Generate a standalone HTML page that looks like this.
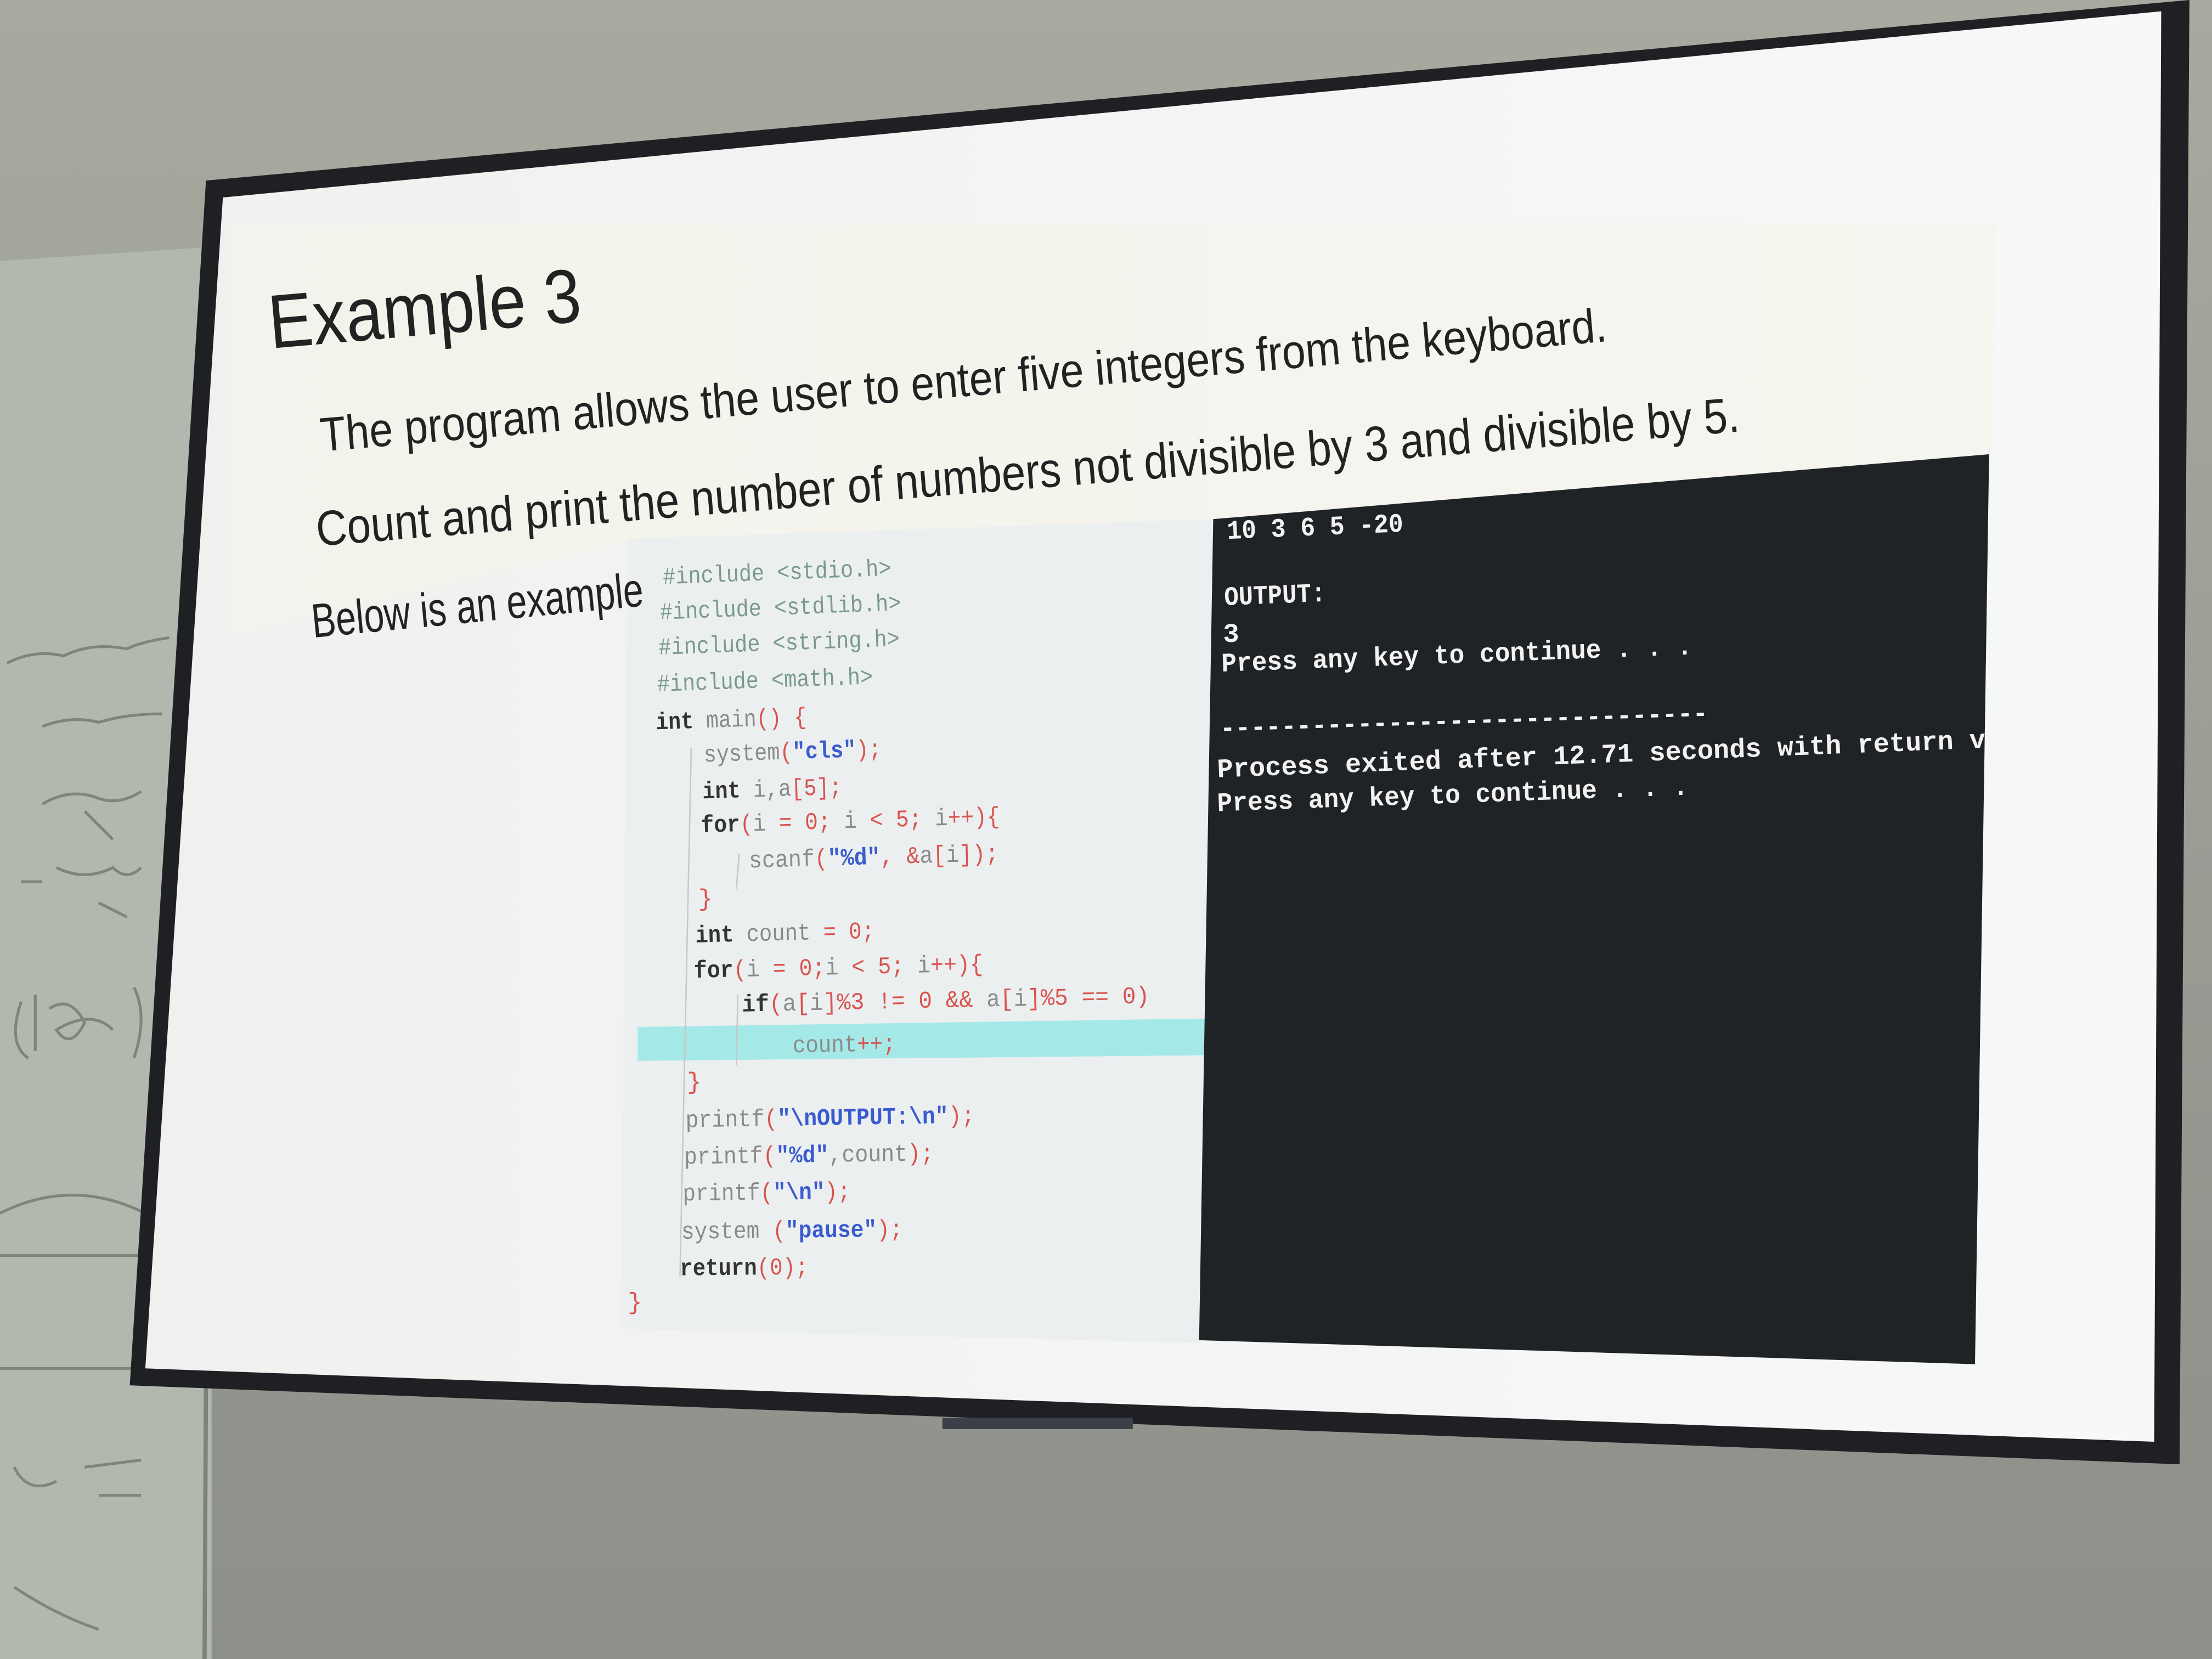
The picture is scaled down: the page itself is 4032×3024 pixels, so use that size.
<!DOCTYPE html>
<html><head><meta charset="utf-8"><style>
html,body{margin:0;padding:0;width:4032px;height:3024px;overflow:hidden;background:#9a9e95}
svg{display:block}
.t{font-family:"Liberation Sans Narrow","Liberation Sans",sans-serif;fill:#222}
.c{font-family:"Liberation Mono","DejaVu Sans Mono",monospace;font-size:17px;fill:#8a8a8a}
.k{fill:#333;font-weight:bold}
.r{fill:#d9534f}
.s{fill:#3a5bd0;font-weight:bold}
.m{font-family:"Liberation Mono","DejaVu Sans Mono",monospace;font-size:19px;fill:#f2f2f2;font-weight:bold}
</style></head><body>
<svg width="4032" height="3024" viewBox="0 0 1568 1176" xmlns="http://www.w3.org/2000/svg">
<defs>
<linearGradient id="wall" x1="0" y1="0" x2="0" y2="1">
<stop offset="0" stop-color="#a6aa9f"/><stop offset="1" stop-color="#8d9089"/>
</linearGradient>
<linearGradient id="scr" x1="0" y1="0" x2="1" y2="0">
<stop offset="0" stop-color="#f0f1ef"/><stop offset="1" stop-color="#f7f8f8"/>
</linearGradient>
</defs>
<rect width="1568" height="1176" fill="url(#wall)"/>
<polygon points="0,185 150,175 150,1176 0,1176" fill="#b3b8ae"/>
<line x1="150" y1="175" x2="145" y2="1176" stroke="#7e827a" stroke-width="3"/>
<g fill="none" stroke="#6a6f68" stroke-width="2" opacity="0.7">
<path d="M5,470 q20,-10 40,-5 q20,-10 45,-5 q10,-5 30,-8"/>
<path d="M30,515 q20,-8 40,-3 q20,-6 45,-6"/>
<path d="M30,570 q20,-12 40,-4 q15,5 30,-5 M60,575 l20,20"/>
<path d="M15,625 l15,0 M40,615 q20,10 40,0 q10,10 20,0 M70,640 l20,10"/>
<path d="M15,710 q-10,30 5,40 M25,705 l0,40 M35,715 q15,-10 25,10 q-10,20 -20,5 q25,-15 40,0 M95,700 q10,20 0,50"/>
<path d="M0,860 q60,-30 120,10 M0,890 l100,0 l0,80 l-100,0"/>
<path d="M10,1040 q10,20 30,10 M60,1040 l40,-5 M70,1060 l30,0"/>
<path d="M10,1125 q30,20 60,30"/>
</g>
<polygon points="146,128 1552,0 1552,0 1545,1038 92,982" fill="#1f2024"/>
<polygon points="158,140 1532,8 1527,1022 103,970" fill="url(#scr)"/>
<polygon points="160,160 1415,158 1412,322 860,368 450,382 165,450" fill="#f5f4ea" opacity="0.6"/>
<polygon points="445,382 860,368 852,952 440,942" fill="#eceff0"/>
<polygon points="452,728 855,722 855,748 452,752" fill="#a4e9e8"/>
<polygon points="860,368 1410,322 1400,967 850,950" fill="#202326"/>

<text class="t" x="192" y="247" font-size="54" textLength="222" lengthAdjust="spacingAndGlyphs" transform="rotate(-5 192 247)">Example 3</text>
<text class="t" x="228" y="320" font-size="34" textLength="915" lengthAdjust="spacingAndGlyphs" transform="rotate(-4.9 228 320)">The program allows the user to enter five integers from the keyboard.</text>
<text class="t" x="225" y="387" font-size="35" textLength="1012" lengthAdjust="spacingAndGlyphs" transform="rotate(-4.6 225 387)">Count and print the number of numbers not divisible by 3 and divisible by 5.</text>
<text class="t" x="222" y="452" font-size="34" textLength="236" lengthAdjust="spacingAndGlyphs" transform="rotate(-5.5 222 452)">Below is an example</text>

<g>
<text class="c" x="470" y="414" textLength="162" lengthAdjust="spacingAndGlyphs" transform="rotate(-2.2 470 414)" style="fill:#7a9a8a">#include &lt;stdio.h&gt;</text>
<text class="c" x="468" y="439" textLength="171" lengthAdjust="spacingAndGlyphs" transform="rotate(-2.2 468 439)" style="fill:#7a9a8a">#include &lt;stdlib.h&gt;</text>
<text class="c" x="467" y="464" textLength="171" lengthAdjust="spacingAndGlyphs" transform="rotate(-2.1 467 464)" style="fill:#7a9a8a">#include &lt;string.h&gt;</text>
<text class="c" x="466" y="490" textLength="153" lengthAdjust="spacingAndGlyphs" transform="rotate(-2 466 490)" style="fill:#7a9a8a">#include &lt;math.h&gt;</text>
<text class="c" x="465" y="517" textLength="107" lengthAdjust="spacingAndGlyphs" transform="rotate(-2 465 517)"><tspan class="k">int</tspan> main<tspan class="r">() {</tspan></text>
<text class="c" x="499" y="540" textLength="126" lengthAdjust="spacingAndGlyphs" transform="rotate(-1.9 499 540)">system<tspan class="r">(</tspan><tspan class="s">"cls"</tspan><tspan class="r">);</tspan></text>
<text class="c" x="498" y="566" textLength="99" lengthAdjust="spacingAndGlyphs" transform="rotate(-1.8 498 566)"><tspan class="k">int</tspan> i,a<tspan class="r">[5];</tspan></text>
<text class="c" x="497" y="590" textLength="212" lengthAdjust="spacingAndGlyphs" transform="rotate(-1.7 497 590)"><tspan class="k">for</tspan><tspan class="r">(</tspan>i <tspan class="r">= 0;</tspan> i <tspan class="r">&lt; 5;</tspan> i<tspan class="r">++){</tspan></text>
<text class="c" x="531" y="615" textLength="177" lengthAdjust="spacingAndGlyphs" transform="rotate(-1.6 531 615)">scanf<tspan class="r">(</tspan><tspan class="s">"%d"</tspan><tspan class="r">, &amp;</tspan>a<tspan class="r">[</tspan>i<tspan class="r">]);</tspan></text>
<text class="c r" x="495" y="642">}</text>
<text class="c" x="493" y="668" textLength="127" lengthAdjust="spacingAndGlyphs" transform="rotate(-1.4 493 668)"><tspan class="k">int</tspan> count <tspan class="r">= 0;</tspan></text>
<text class="c" x="492" y="693" textLength="205" lengthAdjust="spacingAndGlyphs" transform="rotate(-1.3 492 693)"><tspan class="k">for</tspan><tspan class="r">(</tspan>i <tspan class="r">= 0;</tspan>i <tspan class="r">&lt; 5;</tspan> i<tspan class="r">++){</tspan></text>
<text class="c" x="526" y="717" textLength="289" lengthAdjust="spacingAndGlyphs" transform="rotate(-1.2 526 717)"><tspan class="k">if</tspan><tspan class="r">(</tspan>a<tspan class="r">[</tspan>i<tspan class="r">]%3 != 0 &amp;&amp;</tspan> a<tspan class="r">[</tspan>i<tspan class="r">]%5 == 0)</tspan></text>
<text class="c" x="562" y="746" textLength="73" lengthAdjust="spacingAndGlyphs" transform="rotate(-1 562 746)">count<tspan class="r">++;</tspan></text>
<text class="c r" x="487" y="772">}</text>
<text class="c" x="486" y="799" textLength="205" lengthAdjust="spacingAndGlyphs" transform="rotate(-0.9 486 799)">printf<tspan class="r">(</tspan><tspan class="s">"\nOUTPUT:\n"</tspan><tspan class="r">);</tspan></text>
<text class="c" x="485" y="825" textLength="177" lengthAdjust="spacingAndGlyphs" transform="rotate(-0.8 485 825)">printf<tspan class="r">(</tspan><tspan class="s">"%d"</tspan>,count<tspan class="r">);</tspan></text>
<text class="c" x="484" y="851" textLength="119" lengthAdjust="spacingAndGlyphs" transform="rotate(-0.7 484 851)">printf<tspan class="r">(</tspan><tspan class="s">"\n"</tspan><tspan class="r">);</tspan></text>
<text class="c" x="483" y="878" textLength="157" lengthAdjust="spacingAndGlyphs" transform="rotate(-0.6 483 878)">system <tspan class="r">(</tspan><tspan class="s">"pause"</tspan><tspan class="r">);</tspan></text>
<text class="c" x="482" y="904" textLength="91" lengthAdjust="spacingAndGlyphs" transform="rotate(-0.5 482 904)"><tspan class="k">return</tspan><tspan class="r">(0);</tspan></text>
<text class="c r" x="445" y="928">}</text>
<line x1="490" y1="530" x2="482" y2="905" stroke="#c8c8c8" stroke-width="1"/>
<line x1="524" y1="605" x2="522" y2="630" stroke="#c8c8c8" stroke-width="1"/>
<line x1="523" y1="705" x2="522" y2="755" stroke="#c8c8c8" stroke-width="1"/>
</g>

<text class="m" x="870" y="382" textLength="125" lengthAdjust="spacingAndGlyphs" transform="rotate(-2.4 870 382)">10 3 6 5 -20</text>
<text class="m" x="868" y="429" textLength="72" lengthAdjust="spacingAndGlyphs" transform="rotate(-2.3 868 429)">OUTPUT:</text>
<text class="m" x="867" y="455">3</text>
<text class="m" x="866" y="476" textLength="334" lengthAdjust="spacingAndGlyphs" transform="rotate(-2.1 866 476)">Press any key to continue . . .</text>
<text class="m" x="865" y="522" textLength="346" lengthAdjust="spacingAndGlyphs" transform="rotate(-1.8 865 522)">--------------------------------</text>
<text class="m" x="863" y="551" textLength="545" lengthAdjust="spacingAndGlyphs" transform="rotate(-2.2 863 551)">Process exited after 12.71 seconds with return v</text>
<text class="m" x="863" y="575" textLength="334" lengthAdjust="spacingAndGlyphs" transform="rotate(-2 863 575)">Press any key to continue . . .</text>
<rect x="668" y="1005" width="135" height="8" fill="#3b3f48"/>
</svg>
</body></html>
